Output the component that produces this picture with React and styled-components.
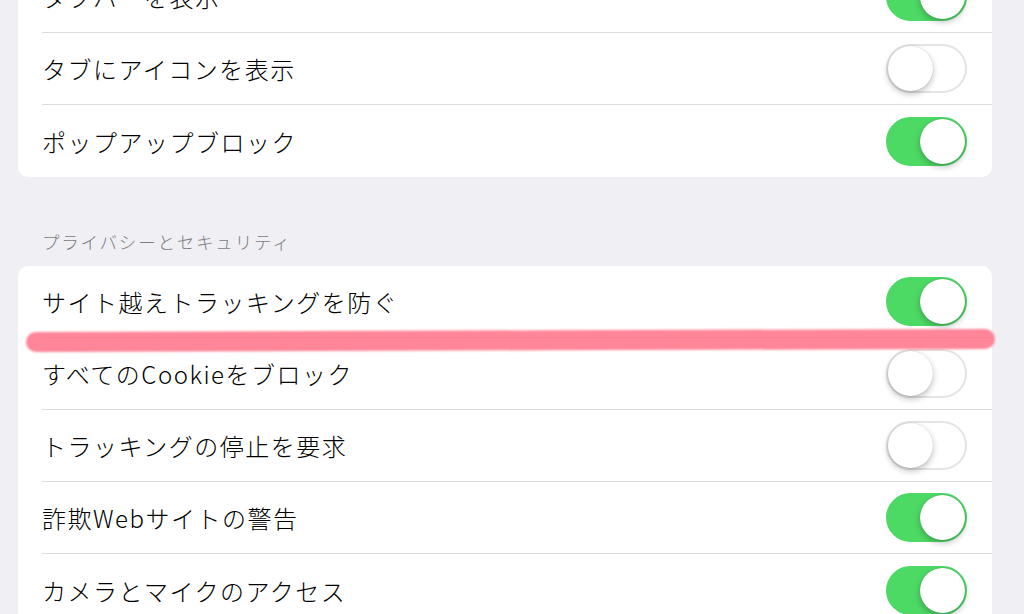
import styled, { createGlobalStyle } from 'styled-components'

const GlobalStyle = createGlobalStyle`
  html, body {
    margin: 0;
    padding: 0;
    background: #efeff4;
    overflow: hidden;
  }
  body {
    font-family: "Noto Sans CJK JP", "Noto Sans", sans-serif;
  }
`

const Page = styled.div`
  position: relative;
  width: 1024px;
  height: 614px;
  overflow: hidden;
`

const Content = styled.div`
  display: flex;
  flex-direction: column;
  padding: 0 32px 0 18px;
  margin-top: -39px;
`

const Card = styled.div`
  background: #fff;
  border-radius: 10px;
  overflow: hidden;
`

const Row = styled.div`
  height: 72px;
  display: flex;
  align-items: center;
  justify-content: space-between;
  margin-left: 24px;
  padding-right: 25px;
  box-sizing: border-box;
  border-bottom: ${(props) => (props.last ? 'none' : '1.5px solid #dcdce0')};
`

const Label = styled.span`
  font-size: 24px;
  font-weight: 300;
  color: #000;
  letter-spacing: 1.5px;
`

const SectionHeader = styled.div`
  font-size: 17.5px;
  font-weight: 300;
  color: #7c7c82;
  padding: 52px 0 12px 24px;
  letter-spacing: 1.8px;
`

const Track = styled.div`
  position: relative;
  width: 81px;
  height: 49px;
  border-radius: 25px;
  box-sizing: border-box;
  background: ${(props) => (props.on ? '#4cd964' : '#fff')};
  border: 2px solid ${(props) => (props.on ? '#4cd964' : '#e4e4e6')};
  flex-shrink: 0;
`

const Knob = styled.div`
  position: absolute;
  top: 0;
  left: ${(props) => (props.on ? '32px' : '0')};
  width: 45px;
  height: 45px;
  border-radius: 50%;
  background: #fff;
  box-shadow: 0 3px 6px rgba(0, 0, 0, 0.25), 0 0 1px rgba(0, 0, 0, 0.2);
`

const Marker = styled.svg`
  position: absolute;
  left: 0;
  top: 0;
  pointer-events: none;
`

const Toggle = ({ on }) => (
  <Track on={on}>
    <Knob on={on} />
  </Track>
)

const general = [
  { label: 'タブバーを表示', on: true },
  { label: 'タブにアイコンを表示', on: false },
  { label: 'ポップアップブロック', on: true },
]

const privacy = [
  { label: 'サイト越えトラッキングを防ぐ', on: true },
  { label: 'すべてのCookieをブロック', on: false },
  { label: 'トラッキングの停止を要求', on: false },
  { label: '詐欺Webサイトの警告', on: true },
  { label: 'カメラとマイクのアクセス', on: true },
]

const App = () => {
  return (
    <Page>
      <GlobalStyle />
      <Content>
        <Card>
          {general.map((item, i) => (
            <Row key={item.label} last={i === general.length - 1}>
              <Label>{item.label}</Label>
              <Toggle on={item.on} />
            </Row>
          ))}
        </Card>
        <SectionHeader>プライバシーとセキュリティ</SectionHeader>
        <Card>
          {privacy.map((item, i) => (
            <Row key={item.label} last={i === privacy.length - 1}>
              <Label>{item.label}</Label>
              <Toggle on={item.on} />
            </Row>
          ))}
        </Card>
      </Content>
      <Marker width="1024" height="614">
        <defs>
          <filter
            id="soft"
            filterUnits="userSpaceOnUse"
            x="0"
            y="300"
            width="1024"
            height="80"
          >
            <feGaussianBlur stdDeviation="1.2" />
          </filter>
        </defs>
        <path
          d="M36 342 C 300 343, 700 338, 985 339"
          stroke="#ff7086"
          strokeOpacity="0.85"
          strokeWidth="20"
          strokeLinecap="round"
          fill="none"
          filter="url(#soft)"
        />
      </Marker>
    </Page>
  )
}

export default App
